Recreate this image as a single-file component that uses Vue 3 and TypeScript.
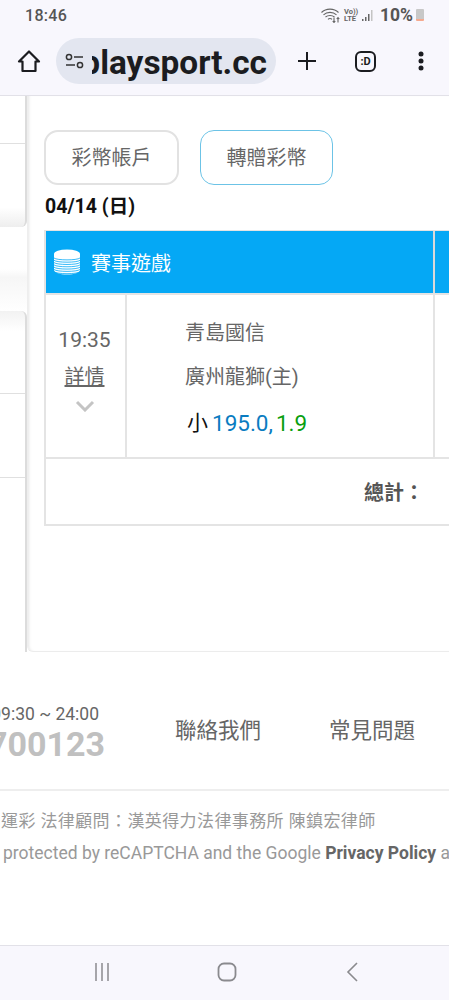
<script setup lang="ts">
const lines: number[] = [0, 1, 2, 3, 4, 5, 6]
</script>

<template>
  <div class="page">
    <header class="chrome">
      <div class="status">
        <span class="clock">18:46</span>
        <div class="status-right">
          <svg class="wifi" width="19" height="15" viewBox="0 0 19 15" fill="none" stroke="#666" stroke-width="1.100">
            <path d="M0.500 4.500C5 0 13 0 17.500 4.500" /><path d="M2.500 6.800C6 3.500 12 3.500 15.500 6.800" /><path d="M4.500 9C7 7 11 7 13.500 9" /><path d="M7 11.300C8 10.300 10 10.300 11 11.300" />
            <path d="M13 9.500v5M11.700 13l1.300 1.500 1.300-1.500" /><path d="M17 14.500v-5M15.700 11l1.300-1.500 1.300 1.500" />
          </svg>
          <div class="volte"><span>Vo))</span><span>LTE</span></div>
          <svg class="signal" width="12" height="13" viewBox="0 0 12 13"><rect x="0" y="10" width="1.500" height="2" fill="#666" /><rect x="3" y="8" width="1.500" height="4" fill="#666" /><rect x="6" y="5" width="1.500" height="7" fill="#666" /><rect x="9" y="1" width="1.500" height="11" fill="#c4c4c4" /></svg>
          <span class="percent">10%</span>
          <div class="battery"></div>
        </div>
      </div>
      <div class="toolbar">
        <svg class="tb-home" width="24" height="24" viewBox="0 0 24 24" fill="none" stroke="#1b1c20" stroke-width="2.200" stroke-linejoin="round"><path d="M2 12.500 12 2.500l10 10h-3.500V22h-13v-9.500z" /></svg>
        <div class="url">
          <svg class="tune" width="20" height="16" viewBox="0 0 20 16" fill="none" stroke="#333" stroke-width="1.500"><circle cx="4" cy="4" r="2.600" /><path d="M9 4h9M1 12h9" /><circle cx="15" cy="12" r="2.600" /></svg>
          <div class="url-clip"><span>playsport.cc</span></div>
        </div>
        <svg class="tb-plus" width="20" height="20" viewBox="0 0 20 20" stroke="#1b1c20" stroke-width="2"><path d="M10 1v18M1 10h18" /></svg>
        <div class="tabs">:D</div>
        <svg class="tb-more" width="6" height="20" viewBox="0 0 6 20" fill="#1b1c20"><circle cx="3" cy="3" r="2.500" /><circle cx="3" cy="10" r="2.500" /><circle cx="3" cy="17" r="2.500" /></svg>
      </div>
    </header>

    <main class="content">
      <div class="upper">
        <aside class="aside">
          <div class="side-card first">
            <div class="side-row r1"></div>
            <div class="side-row r2"></div>
          </div>
          <div class="side-gap"></div>
          <div class="side-card second">
            <div class="side-row r3"></div>
            <div class="side-row r4"></div>
            <div class="side-row r5"></div>
          </div>
        </aside>
        <section class="panel">
          <div class="btns">
            <button class="btn">彩幣帳戶</button>
            <button class="btn active">轉贈彩幣</button>
          </div>
          <div class="date">04/14 (日)</div>
          <div class="table">
            <div class="thead">
              <div class="th-main">
                <svg class="coins" width="28" height="28" viewBox="0 0 28 28">
                  <ellipse cx="14" cy="6" rx="13" ry="4.500" fill="#fff" />
                  <path d="M1 6v16c0 2.500 5.800 4.500 13 4.500s13-2 13-4.500V6" fill="#fff" />
                  <path v-for="n in lines" :key="n" :d="`M1 ${10 + n * 2.300}c3 2.500 23 2.500 26 0`" fill="none" stroke="#05a8f5" stroke-width="0.800" />
                </svg>
                <span>賽事遊戲</span>
              </div>
              <div class="th-next"></div>
            </div>
            <div class="tbody">
              <div class="c-time">
                <span class="time">19:35</span>
                <span class="detail">詳情</span>
                <svg class="chev" width="20" height="12" viewBox="0 0 20 12" fill="none" stroke="#c4c4c4" stroke-width="3"><path d="M2 2l8 8 8-8" /></svg>
              </div>
              <div class="c-match">
                <span class="team">青島國信</span>
                <span class="team">廣州龍獅(主)</span>
                <div class="pick"><span class="pk">小</span><span class="blue">195.0,</span><span class="green">1.9</span></div>
              </div>
              <div class="c-next"></div>
            </div>
            <div class="tfoot"><strong>總計：</strong></div>
          </div>
        </section>
      </div>

      <footer class="footer">
        <div class="contact">
          <div class="hotline">
            <span class="hours">09:30 ~ 24:00</span>
            <span class="phone">0800700123</span>
          </div>
          <a class="link l1">聯絡我們</a>
          <a class="link l2">常見問題</a>
        </div>
        <div class="legal">
          <p class="legal-1">運彩 法律顧問：漢英得力法律事務所 陳鎮宏律師</p>
          <p class="legal-2">protected by reCAPTCHA and the Google <b>Privacy Policy</b> and</p>
        </div>
      </footer>
    </main>

    <nav class="navbar">
      <svg width="16" height="20" viewBox="0 0 16 20" stroke="#8a8a8e" stroke-width="1.500"><path d="M2 1v18M8 1v18M14 1v18" /></svg>
      <svg width="20" height="20" viewBox="0 0 20 20" fill="none" stroke="#8a8a8e" stroke-width="1.800"><rect x="1.500" y="1.500" width="17" height="17" rx="5.500" /></svg>
      <svg width="12" height="20" viewBox="0 0 12 20" fill="none" stroke="#8a8a8e" stroke-width="1.600"><path d="M11 1 2 10l9 9" /></svg>
    </nav>
  </div>
</template>

<style>
html, body { margin: 0; background: #fff; }
</style>

<style scoped>
.page {
  width: 449px;
  height: 1000px;
  display: flex;
  flex-direction: column;
  overflow: hidden;
  font-family: Roboto, "Noto Sans CJK TC", sans-serif;
  color: #666;
  background: #fff;
}
.chrome {
  height: 96px;
  flex: none;
  background: #f8f7fd;
  border-bottom: 1px solid #e2e1e8;
  box-sizing: border-box;
}
.status {
  height: 30px;
  display: flex;
  align-items: center;
  justify-content: space-between;
  padding: 0 25px;
}
.clock { font-size: 16px; font-weight: 500; color: #555; letter-spacing: 0.3px; }
.status-right { display: flex; align-items: center; }
.volte { display: flex; flex-direction: column; width: 13px; margin-left: 4px; font-size: 7.500px; line-height: 7.500px; font-weight: 700; color: #666; white-space: nowrap; }
.signal { margin-left: 5px; }
.percent { font-size: 17.500px; font-weight: 700; color: #555; margin-left: 6px; }
.battery {
  width: 8px;
  height: 12px;
  margin-left: 3px;
  border-radius: 1px;
  background: linear-gradient(#c8c8c8 0 80%, #f5a98e 80%);
}
.toolbar {
  height: 65px;
  display: flex;
  align-items: center;
  padding-left: 17px;
  padding-bottom: 3px;
  box-sizing: border-box;
}
.url {
  width: 220px;
  height: 46px;
  margin-left: 15px;
  border-radius: 23px;
  background: #e3e6f0;
  display: flex;
  align-items: center;
  padding: 0 9px;
  box-sizing: border-box;
}
.tune { flex: none; }
.url-clip {
  flex: 1;
  overflow: hidden;
  display: flex;
  justify-content: flex-end;
  margin-left: 7px;
  padding-top: 4px;
}
.url-clip span {
  flex: none;
  font-size: 33.400px;
  font-weight: 700;
  color: #1b1c20;
  line-height: 46px;
}
.tb-plus { margin-left: 21px; }
.tabs {
  width: 17px;
  height: 17px;
  margin-left: 38px;
  border: 2px solid #1b1c20;
  border-radius: 6px;
  font-size: 11px;
  font-weight: 700;
  color: #1b1c20;
  display: flex;
  align-items: center;
  justify-content: center;
}
.tb-more { margin-left: 42px; }
.content { flex: 1; display: flex; flex-direction: column; min-height: 0; }
.upper { height: 556px; display: flex; flex: none; }
.aside {
  width: 27px;
  flex: none;
  display: flex;
  flex-direction: column;
}
.side-card {
  background: #fff;
  border-right: 2px solid #dcdcdc;
  box-sizing: border-box;
}
.first { height: 131px; border-radius: 0 0 6px 0; background: linear-gradient(#fff 85%, #eee); }
.side-row { border-bottom: 1px solid #e0e0e0; box-sizing: border-box; }
.r1 { height: 48px; }
.r2 { border: none; }
.side-gap { height: 84px; background: linear-gradient(#fff 50%, #f6f6f6 60%, #fff); }
.second {
  flex: 1;
  border-radius: 0 6px 0 0;
  background: linear-gradient(#f2f2f2, #fff 20px);
}
.r3 { height: 83px; }
.r4 { height: 84px; }
.r5 { border: none; }
.panel {
  flex: 1;
  min-width: 0;
  padding: 34px 0 0 16px;
  border-left: 1px solid #eee;
  border-bottom: 1px solid #ececec;
  border-radius: 0 0 0 6px;
  box-shadow: inset 3px 0 3px -2px #e6e6e6;
  overflow: hidden;
}
.btns { display: flex; gap: 21px; }
.btn {
  height: 55px;
  width: 135px;
  border: 2px solid #e2e2e2;
  border-radius: 14px;
  background: #fff;
  font: 400 20px Roboto, "Noto Sans CJK TC", sans-serif;
  color: #666;
  padding: 0 0 2px;
}
.btn.active { width: 133px; border: 1px solid #6cc3e6; }
.date { font-size: 19.500px; font-weight: 700; color: #111; line-height: 24px; margin-top: 10px; margin-left: 1px; }
.table {
  width: 440px;
  margin-top: 11px;
  border-top: 1px solid #e4e4e4;
  border-left: 2px solid #e4e4e4;
  border-bottom: 2px solid #e4e4e4;
  box-sizing: border-box;
}
.thead { display: flex; height: 62px; background: #05a8f5; }
.th-main {
  width: 389px;
  display: flex;
  align-items: center;
  gap: 10px;
  padding-left: 7px;
  box-sizing: border-box;
  border-right: 2px solid #d9d9d9;
  color: #fff;
  font-size: 20px;
}
.th-next { flex: 1; }
.tbody { display: flex; height: 162px; border-top: 2px solid #e4e4e4; border-bottom: 2px solid #e4e4e4; box-sizing: content-box; }
.c-time {
  width: 81px;
  border-right: 2px solid #e4e4e4;
  display: flex;
  flex-direction: column;
  align-items: center;
  padding: 31px 2px 0 0;
  box-sizing: border-box;
}
.time { font-size: 21px; line-height: 28px; color: #666; }
.detail {
  font-size: 20px;
  line-height: 28px;
  margin-top: 9px;
  color: #666;
  text-decoration: underline;
  text-decoration-skip-ink: none;
}
.chev { margin-top: 9px; }
.c-match {
  width: 308px;
  border-right: 2px solid #e4e4e4;
  box-sizing: border-box;
  padding: 24px 0 0 58px;
  display: flex;
  flex-direction: column;
}
.team { font-size: 20px; line-height: 28px; height: 44px; color: #666; }
.pick { display: flex; align-items: center; font-size: 22.500px; line-height: 28px; margin-top: 2px; }
.pk { font-size: 21px; color: #111; margin-right: 4px; margin-left: 2px; }
.blue { color: #0a7cc1; }
.green { color: #0a9f10; margin-left: 3px; }
.c-next { flex: 1; }
.tfoot {
  height: 65px;
  display: flex;
  align-items: center;
  padding-left: 318px;
  box-sizing: border-box;
  font-size: 20px;
  color: #555;
}
.footer { flex: 1; display: flex; flex-direction: column; }
.contact {
  height: 139px;
  border-bottom: 2px solid #eee;
  box-sizing: border-box;
  display: flex;
  align-items: flex-start;
  padding-top: 52px;
}
.hotline {
  width: 105px;
  flex: none;
  overflow: hidden;
  display: flex;
  flex-direction: column;
  align-items: flex-end;
}
.hours { font-size: 17.500px; line-height: 20px; white-space: nowrap; color: #666; margin-right: 6px; }
.phone { font-size: 34px; font-weight: 700; line-height: 40px; color: #c0c0c0; white-space: nowrap; }
.link { font-size: 21.500px; color: #666; line-height: 30px; margin-top: 12px; }
.l1 { margin-left: 70px; }
.l2 { margin-left: 68px; }
.legal { overflow: hidden; padding-top: 18px; color: #999; white-space: nowrap; }
.legal p { margin: 0; }
.legal-1 { line-height: 24px; margin-left: 1px !important; letter-spacing: 0.400px; font-size: 17px; }
.legal-2 { line-height: 24px; font-size: 17.500px; margin-top: 8px !important; margin-left: 3px !important; }
.legal-2 b { color: #666; font-weight: 700; }
.navbar {
  height: 55px;
  flex: none;
  background: #f8f7fd;
  border-top: 1px solid #e2e1e8;
  box-sizing: border-box;
  display: grid;
  grid-template-columns: 203px 125px 1fr;
  align-items: center;
  justify-items: center;
  padding-bottom: 3px;
}
.navbar svg:first-child { justify-self: end; margin-right: 93px; }
.navbar svg:nth-child(2) { justify-self: start; margin-left: 14px; }
.navbar svg:nth-child(3) { justify-self: start; margin-left: 18px; }
</style>
